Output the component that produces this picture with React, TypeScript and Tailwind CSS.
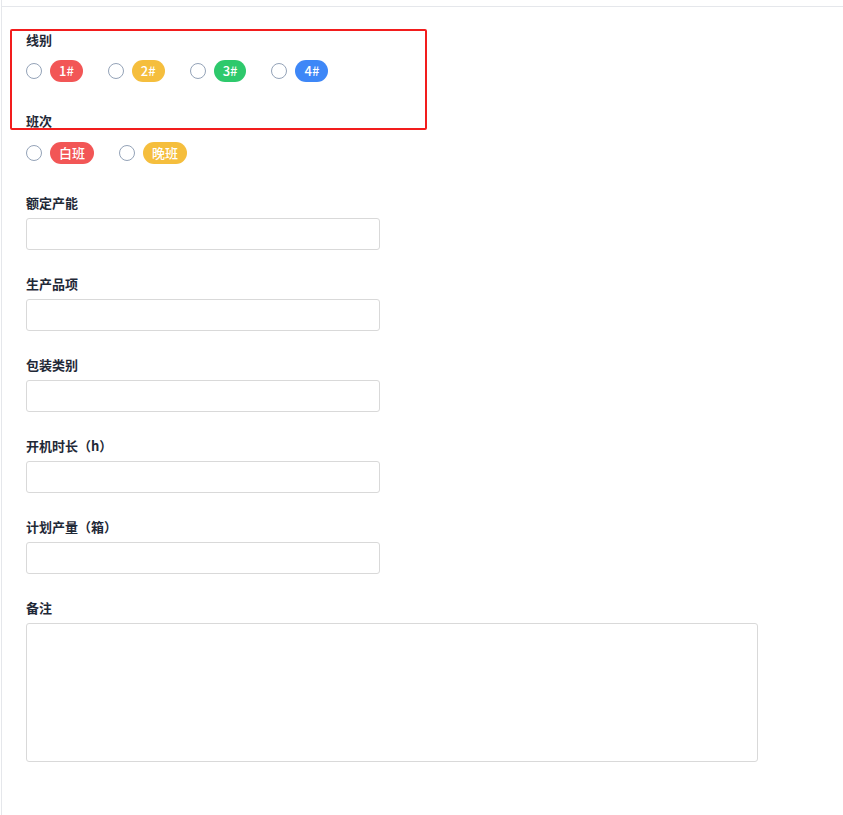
import React, { useState } from 'react'

const lines = [
  { id: '1', label: '1#', color: 'bg-[#f25656]' },
  { id: '2', label: '2#', color: 'bg-[#f5be3d]' },
  { id: '3', label: '3#', color: 'bg-[#2ec96c]' },
  { id: '4', label: '4#', color: 'bg-[#3e87f7]' },
]

const shifts = [
  { id: 'day', label: '白班', color: 'bg-[#f25656]' },
  { id: 'night', label: '晚班', color: 'bg-[#f5be3d]' },
]

const fields = ['额定产能', '生产品项', '包装类别', '开机时长（h）', '计划产量（箱）']

function Radio({ name, label, color, checked, onChange }: {
  name: string
  label: string
  color: string
  checked: boolean
  onChange: () => void
}) {
  return (
    <label className="flex items-center gap-2 cursor-pointer">
      <input
        type="radio"
        name={name}
        checked={checked}
        onChange={onChange}
        className="appearance-none w-4 h-4 rounded-full border border-[#94a3b8] bg-white checked:border-[5px] checked:border-[#3e87f7]"
      />
      <span className={`${color} text-white text-[13px] font-medium leading-[22px] h-[22px] px-[9px] rounded-full`}>{label}</span>
    </label>
  )
}

export default function App() {
  const [line, setLine] = useState('')
  const [shift, setShift] = useState('')

  return (
    <div
      className="min-h-[815px] bg-white ml-px border-l border-[#e5e7eb] text-[#1f2937]"
      style={{ fontFamily: '"Noto Sans CJK SC", "Noto Sans", sans-serif' }}
    >
      <div className="h-[7px] border-b border-[#e5e7eb]" />

      <div className="px-[24px] pt-[22px]">
        {/* annotation frame around 线别 */}
        <div className="relative">
          <div className="absolute -left-[16px] top-0 w-[417px] h-[101px] border-[2.5px] border-[#f21d1d] rounded-[2px] pointer-events-none" />
        </div>

        <div className="pt-[2px]">
          <div className="text-[13px] font-bold leading-[18px] h-[18px]">线别</div>
          <div className="flex items-center gap-[25px] mt-[11px]">
            {lines.map((l) => (
              <Radio key={l.id} name="line" label={l.label} color={l.color} checked={line === l.id} onChange={() => setLine(l.id)} />
            ))}
          </div>
        </div>

        <div className="mt-[30px]">
          <div className="text-[13px] font-bold leading-[18px] h-[18px]">班次</div>
          <div className="flex items-center gap-[25px] mt-[12px]">
            {shifts.map((s) => (
              <Radio key={s.id} name="shift" label={s.label} color={s.color} checked={shift === s.id} onChange={() => setShift(s.id)} />
            ))}
          </div>
        </div>

        {fields.map((f, i) => (
          <div key={f} className={i === 0 ? 'mt-[30px]' : 'mt-[25px]'}>
            <div className="text-[13px] font-bold leading-[18px] h-[18px]">{f}</div>
            <input
              type="text"
              className="mt-[6px] block w-[354px] h-[32px] border border-[#d9d9d9] rounded-[3px] px-2 text-[13px] outline-none"
            />
          </div>
        ))}

        <div className="mt-[25px]">
          <div className="text-[13px] font-bold leading-[18px] h-[18px]">备注</div>
          <textarea className="mt-[6px] block w-[732px] h-[139px] border border-[#d9d9d9] rounded-[3px] px-2 py-1 text-[13px] outline-none resize-none" />
        </div>
      </div>
    </div>
  )
}
